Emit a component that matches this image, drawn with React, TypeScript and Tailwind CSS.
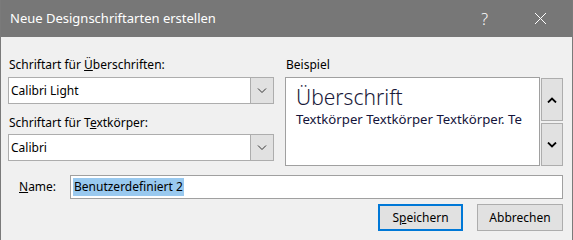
import React from "react";

const font = { fontFamily: '"Segoe UI", "Noto Sans", "Open Sans", sans-serif' };

function Chevron({ up = false, bold = false }: { up?: boolean; bold?: boolean }) {
  return (
    <svg width="10" height="6" viewBox="0 0 10 6" className="block">
      <path
        d={up ? "M1 5.5 L5 1.5 L9 5.5" : "M1 0.5 L5 4.5 L9 0.5"}
        fill="none"
        stroke={bold ? "#000" : "#333"}
        strokeWidth={bold ? 1.8 : 1}
      />
    </svg>
  );
}

function Combo({ value }: { value: string }) {
  return (
    <div className="flex h-[27px] w-[266px] border border-[#adadad] bg-white">
      <div className="flex flex-1 items-center pl-[2px] text-[12px] text-black">{value}</div>
      <div className="flex w-[23px] items-center justify-center border-l border-[#adadad] bg-[#e1e1e1]">
        <Chevron />
      </div>
    </div>
  );
}

export default function App() {
  return (
    <div style={font} className="h-[240px] w-[573px] overflow-hidden border-x border-[#7a7a7a] bg-[#f0f0f0] text-[12px] text-black">
      <div className="flex h-[37px] items-center bg-[#777777] pl-[9px] text-[13px] text-white">
        <span className="flex-1">Neue Designschriftarten erstellen</span>
        <span className="mr-[46px] text-[16px] font-light">?</span>
        <svg width="13" height="13" viewBox="0 0 13 13" className="mr-[25px]">
          <path d="M1 1 L12 12 M12 1 L1 12" stroke="#fff" strokeWidth="1" />
        </svg>
      </div>

      <div className="pl-[7px] pr-[9px]">
        <div className="flex pt-[20px]">
          <div className="w-[266px]">
            <div className="h-[16px] pl-[1px] leading-[16px]">
              Schriftart für <span className="underline">Ü</span>berschriften:
            </div>
            <div className="mt-[4px]">
              <Combo value="Calibri Light" />
            </div>
            <div className="mt-[11px] h-[16px] pl-[1px] leading-[16px]">
              Schriftart für T<span className="underline">e</span>xtkörper:
            </div>
            <div className="mt-[3px]">
              <Combo value="Calibri" />
            </div>
          </div>

          <div className="ml-[11px] flex-1">
            <div className="h-[16px] pl-[1px] leading-[16px]">Beispiel</div>
            <div className="mt-[4px] flex gap-[1px]">
              <div className="h-[89px] w-[255px] overflow-hidden border border-[#a0a0a0] bg-white pl-[10px] pt-[5px]">
                <div className="text-[21px] font-light leading-[28px] text-[#1a1a3a]">Überschrift</div>
                <div className="whitespace-nowrap text-[13.2px] leading-[17px] text-[#14143a]">
                  Textkörper Textkörper Textkörper. Te
                </div>
              </div>
              <div className="flex flex-col gap-[2px] pt-[1px]">
                <div className="flex h-[43px] w-[22px] items-center justify-center border border-[#adadad] bg-[#e1e1e1]">
                  <Chevron up bold />
                </div>
                <div className="flex h-[43px] w-[22px] items-center justify-center border border-[#adadad] bg-[#e1e1e1]">
                  <Chevron bold />
                </div>
              </div>
            </div>
          </div>
        </div>

        <div className="mt-[9px] flex items-center">
          <div className="w-[62px] pl-[11px]">
            <span className="underline">N</span>ame:
          </div>
          <div className="flex h-[24px] flex-1 items-center border border-[#a0a0a0] bg-white pl-[2px]">
            <span className="bg-[#99c9ef] px-[1px] text-[12px] leading-[18px]">Benutzerdefiniert 2</span>
          </div>
        </div>

        <div className="mt-[5px] flex justify-end gap-[14px]">
          <div className="flex h-[27px] w-[85px] items-center justify-center border-2 border-[#0078d7] bg-[#e1e1e1]">
            S<span className="underline">p</span>eichern
          </div>
          <div className="flex h-[27px] w-[86px] items-center justify-center border border-[#adadad] bg-[#e1e1e1]">
            Abbrechen
          </div>
        </div>
      </div>
    </div>
  );
}
